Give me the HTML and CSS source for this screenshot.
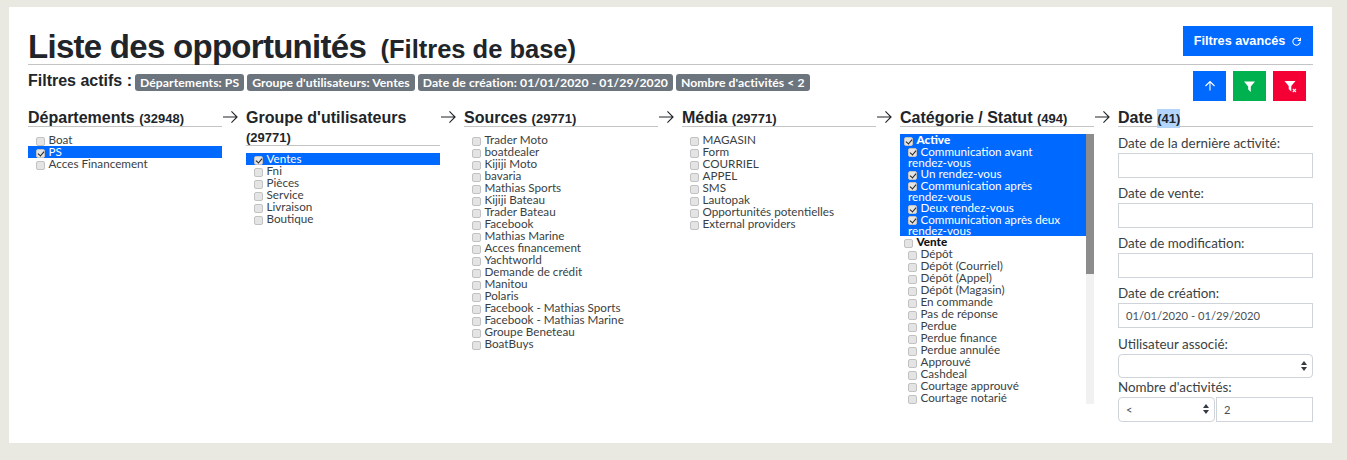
FILE: index.html
```html
<!DOCTYPE html>
<html lang="fr">
<head>
  <meta charset="UTF-8">
  <title>Liste des opportunités</title>
  <link rel="stylesheet" href="styles.css">
</head>
<body>
  <div class="card">
    <div class="page-header">
      <h1>Liste des opportunités <small>(Filtres de base)</small></h1>
      <button class="btn btn-blue btn-advanced">Filtres avancés
        <svg class="icon-redo" viewBox="0 0 12 12"><path d="M10 6.2A4 4 0 1 1 8.8 3.2L10.2 4.6M10.4 1.8v3h-3" fill="none" stroke="currentColor" stroke-width="1.1"/></svg>
      </button>
    </div>

    <div class="active-row">
      <strong class="active-label">Filtres actifs :</strong>
      <span class="badge">Départements: PS</span>
      <span class="badge">Groupe d'utilisateurs: Ventes</span>
      <span class="badge">Date de création: 01/01/2020 - 01/29/2020</span>
      <span class="badge">Nombre d'activités &lt; 2</span>
      <div class="actions">
        <button class="btn btn-blue btn-square">
          <svg viewBox="0 0 12 12" width="12" height="12"><path d="M6 10.5V1.5M1.5 6L6 1.5 10.5 6" fill="none" stroke="currentColor" stroke-width="1.1"/></svg>
        </button>
        <button class="btn btn-green btn-square">
          <svg viewBox="0 0 13 13" width="13" height="13"><path d="M1 1.5h11L7.8 6.6V12L5.2 9.6v-3z" fill="currentColor"/></svg>
        </button>
        <button class="btn btn-red btn-square">
          <svg viewBox="0 0 16 14" width="16" height="14"><path d="M2.5 2h11L9.3 7v5.5L6.7 10V7z" fill="currentColor"/><path d="M10.8 9.8l3.2 3.2M14 9.8L10.8 13" stroke="currentColor" stroke-width="1.1"/></svg>
        </button>
      </div>
    </div>

    <div class="columns">
      <section class="col">
        <h2>Départements <small>(32948)</small></h2>
        <ul class="opts">
          <li><input type="checkbox">Boat</li>
          <li class="on"><input type="checkbox" checked>PS</li>
          <li><input type="checkbox">Acces Financement</li>
        </ul>
      </section>
      <svg class="arrow" viewBox="0 0 16 14"><path d="M0 7h15M9 1l6 6-6 6" fill="none" stroke="#212529" stroke-width="1.2"/></svg>

      <section class="col">
        <h2>Groupe d'utilisateurs <small>(29771)</small></h2>
        <ul class="opts">
          <li class="on"><input type="checkbox" checked>Ventes</li>
          <li><input type="checkbox">Fni</li>
          <li><input type="checkbox">Pièces</li>
          <li><input type="checkbox">Service</li>
          <li><input type="checkbox">Livraison</li>
          <li><input type="checkbox">Boutique</li>
        </ul>
      </section>
      <svg class="arrow" viewBox="0 0 16 14"><path d="M0 7h15M9 1l6 6-6 6" fill="none" stroke="#212529" stroke-width="1.2"/></svg>

      <section class="col">
        <h2>Sources <small>(29771)</small></h2>
        <ul class="opts">
          <li><input type="checkbox">Trader Moto</li>
          <li><input type="checkbox">boatdealer</li>
          <li><input type="checkbox">Kijiji Moto</li>
          <li><input type="checkbox">bavaria</li>
          <li><input type="checkbox">Mathias Sports</li>
          <li><input type="checkbox">Kijiji Bateau</li>
          <li><input type="checkbox">Trader Bateau</li>
          <li><input type="checkbox">Facebook</li>
          <li><input type="checkbox">Mathias Marine</li>
          <li><input type="checkbox">Acces financement</li>
          <li><input type="checkbox">Yachtworld</li>
          <li><input type="checkbox">Demande de crédit</li>
          <li><input type="checkbox">Manitou</li>
          <li><input type="checkbox">Polaris</li>
          <li><input type="checkbox">Facebook - Mathias Sports</li>
          <li><input type="checkbox">Facebook - Mathias Marine</li>
          <li><input type="checkbox">Groupe Beneteau</li>
          <li><input type="checkbox">BoatBuys</li>
        </ul>
      </section>
      <svg class="arrow" viewBox="0 0 16 14"><path d="M0 7h15M9 1l6 6-6 6" fill="none" stroke="#212529" stroke-width="1.2"/></svg>

      <section class="col">
        <h2>Média <small>(29771)</small></h2>
        <ul class="opts">
          <li><input type="checkbox">MAGASIN</li>
          <li><input type="checkbox">Form</li>
          <li><input type="checkbox">COURRIEL</li>
          <li><input type="checkbox">APPEL</li>
          <li><input type="checkbox">SMS</li>
          <li><input type="checkbox">Lautopak</li>
          <li><input type="checkbox">Opportunités potentielles</li>
          <li><input type="checkbox">External providers</li>
        </ul>
      </section>
      <svg class="arrow" viewBox="0 0 16 14"><path d="M0 7h15M9 1l6 6-6 6" fill="none" stroke="#212529" stroke-width="1.2"/></svg>

      <section class="col">
        <h2>Catégorie / Statut <small>(494)</small></h2>
        <div class="status-box">
          <ul class="statuses">
            <li class="group on"><input type="checkbox" checked>Active</li>
            <li class="sub on wrap"><input type="checkbox" checked>Communication avant<br>rendez-vous</li>
            <li class="sub on"><input type="checkbox" checked>Un rendez-vous</li>
            <li class="sub on wrap"><input type="checkbox" checked>Communication après<br>rendez-vous</li>
            <li class="sub on"><input type="checkbox" checked>Deux rendez-vous</li>
            <li class="sub on wrap"><input type="checkbox" checked>Communication après deux<br>rendez-vous</li>
            <li class="group"><input type="checkbox">Vente</li>
            <li class="sub"><input type="checkbox">Dépôt</li>
            <li class="sub"><input type="checkbox">Dépôt (Courriel)</li>
            <li class="sub"><input type="checkbox">Dépôt (Appel)</li>
            <li class="sub"><input type="checkbox">Dépôt (Magasin)</li>
            <li class="sub"><input type="checkbox">En commande</li>
            <li class="sub"><input type="checkbox">Pas de réponse</li>
            <li class="sub"><input type="checkbox">Perdue</li>
            <li class="sub"><input type="checkbox">Perdue finance</li>
            <li class="sub"><input type="checkbox">Perdue annulée</li>
            <li class="sub"><input type="checkbox">Approuvé</li>
            <li class="sub"><input type="checkbox">Cashdeal</li>
            <li class="sub"><input type="checkbox">Courtage approuvé</li>
            <li class="sub"><input type="checkbox">Courtage notarié</li>
          </ul>
          <div class="scroll-track"><div class="scroll-thumb"></div></div>
        </div>
      </section>
      <svg class="arrow" viewBox="0 0 16 14"><path d="M0 7h15M9 1l6 6-6 6" fill="none" stroke="#212529" stroke-width="1.2"/></svg>

      <section class="col">
        <h2>Date <small class="picked">(41)</small></h2>
        <div class="date-form">
          <label>Date de la dernière activité:</label>
          <input class="field" type="text">
          <label>Date de vente:</label>
          <input class="field" type="text">
          <label>Date de modification:</label>
          <input class="field" type="text">
          <label>Date de création:</label>
          <input class="field" type="text" value="01/01/2020 - 01/29/2020">
          <label class="tall">Utilisateur associé:</label>
          <div class="fake-select"></div>
          <label>Nombre d'activités:</label>
          <div class="count-row">
            <div class="fake-select">&lt;</div>
            <input class="field" type="text" value="2">
          </div>
        </div>
      </section>
    </div>
  </div>
</body>
</html>
```

FILE: styles.css
```css
* {
  box-sizing: border-box;
}

body {
  margin: 0;
  padding: 7px 15px 17px 9px;
  background: #e9e9e1;
  font-family: 'Lato', sans-serif;
  color: #212529;
}

.card {
  height: 436px;
  background: #fff;
  padding: 19px 19px 0;
}

.page-header {
  display: flex;
  justify-content: space-between;
  align-items: flex-start;
  height: 39px;
  border-bottom: 1px solid #c4c4c4;
}

h1 {
  margin: 0;
  font-family: 'Liberation Sans', sans-serif;
  font-size: 33px;
  line-height: 42px;
  font-weight: bold;
  letter-spacing: -0.72px;
  white-space: nowrap;
}

h1 small {
  font-size: 25.5px;
  letter-spacing: 0;
  margin-left: 6px;
}

.btn {
  border: none;
  color: #fff;
  padding: 0;
  display: flex;
  align-items: center;
  justify-content: center;
  cursor: pointer;
}

.btn-blue { background: #0069ff; }
.btn-green { background: #00b14f; }
.btn-red { background: #f50035; }

.btn-advanced {
  width: 130px;
  height: 30px;
  gap: 6px;
  font-family: 'Liberation Sans', sans-serif;
  font-size: 12.7px;
  font-weight: bold;
}

.icon-redo {
  width: 11px;
  height: 11px;
}

.active-row {
  display: flex;
  align-items: flex-start;
  gap: 3px;
  height: 43px;
  padding-top: 8px;
}

.active-label {
  font-family: 'Liberation Sans', sans-serif;
  font-size: 16px;
  line-height: 16px;
}

.badge {
  height: 17px;
  line-height: 17px;
  margin-top: 1px;
  padding: 0 5px;
  background: #6c757d;
  color: #fff;
  border-radius: 3px;
  font-size: 12.2px;
  letter-spacing: 0.07px;
  font-weight: bold;
  white-space: nowrap;
}

.actions {
  margin-left: auto;
  margin-right: 7px;
  margin-top: -2px;
  display: flex;
  gap: 7px;
}

.btn-square {
  width: 33px;
  height: 30px;
}

.columns {
  display: flex;
  align-items: flex-start;
}

.col {
  width: 194px;
  flex: none;
}

.col:last-child {
  width: 195px;
}

.arrow {
  width: 24px;
  height: 14px;
  flex: none;
  margin-top: 2px;
  padding: 0 8px 0 1px;
}

h2 {
  margin: 0 0 7px;
  border-bottom: 1px solid #c4c4c4;
  font-family: 'Liberation Sans', sans-serif;
  font-size: 16px;
  line-height: 19px;
  font-weight: bold;
}

/* pulls the rule up under the text */
h2::after {
  content: "";
  display: block;
  margin-top: -2px;
}

h2 small {
  font-size: 13px;
}

h2 .picked {
  display: inline-block;
  background: #b3d4fb;
}

.opts, .statuses {
  list-style: none;
  margin: 0;
  padding: 0;
  font-size: 11.7px;
  line-height: 10px;
  color: #3a3f44;
}

.opts li {
  padding-left: 8px;
  height: 12px;
  white-space: nowrap;
}

.statuses li.on, .opts li.on {
  background: #0069ff;
  color: #fff;
}

li input {
  appearance: none;
  width: 9px;
  height: 9px;
  margin: 0 3.5px 0 0;
  vertical-align: -2px;
  border: 1px solid #c2c2c2;
  border-radius: 2px;
  background: #e4e4e4;
  position: relative;
}

li input:checked::after {
  content: "";
  position: absolute;
  left: 2px;
  top: 0;
  width: 3px;
  height: 5px;
  border: solid #222;
  border-width: 0 1.5px 1.5px 0;
  transform: rotate(40deg);
}

.status-box {
  height: 270px;
  position: relative;
}

.statuses {
  width: 186px;
}

.statuses li {
  height: 12px;
}

.statuses .group {
  padding-left: 4px;
  font-weight: 900;
  color: #111;
}

.statuses .group.on {
  color: #fff;
}

.statuses .sub {
  padding-left: 8px;
}

.statuses .wrap {
  height: 22px;
  line-height: 11px;
}

.statuses .wrap input {
  vertical-align: -1px;
}

.scroll-track {
  position: absolute;
  top: 0;
  right: 0;
  bottom: 0;
  width: 8px;
  background: #f1f1f1;
}

.scroll-thumb {
  height: 140px;
  background: #8c8c8c;
}

.date-form {
  display: flex;
  flex-direction: column;
  font-size: 13.4px;
  color: #3a3f44;
}

.date-form label {
  line-height: 16px;
  margin-top: 1px;
  margin-bottom: 2px;
}

.date-form .tall {
  margin-top: 2px;
}

.field {
  width: 100%;
  height: 25px;
  margin-bottom: 6px;
  padding: 0 7px;
  border: 1px solid #ced4da;
  font-family: inherit;
  font-size: 11.2px;
  color: #495057;
  border-radius: 0;
  outline: none;
}

.fake-select {
  height: 24px;
  padding: 0 7px;
  border: 1px solid #ced4da;
  border-radius: 4px;
  font-size: 11.2px;
  line-height: 24px;
  color: #495057;
  position: relative;
}

.fake-select::after {
  content: "";
  position: absolute;
  right: 5px;
  top: 6px;
  width: 0;
  height: 0;
  border: solid transparent;
  border-width: 0 3px 4px;
  border-bottom-color: #343a40;
}

.fake-select::before {
  content: "";
  position: absolute;
  right: 5px;
  top: 12px;
  width: 0;
  height: 0;
  border: solid transparent;
  border-width: 4px 3px 0;
  border-top-color: #343a40;
}

.count-row {
  display: flex;
  gap: 1px;
}

.count-row .fake-select {
  width: 97px;
  height: 25px;
  flex: none;
}

.count-row .field {
  flex: 1;
  min-width: 0;
  margin: 0;
}
```
